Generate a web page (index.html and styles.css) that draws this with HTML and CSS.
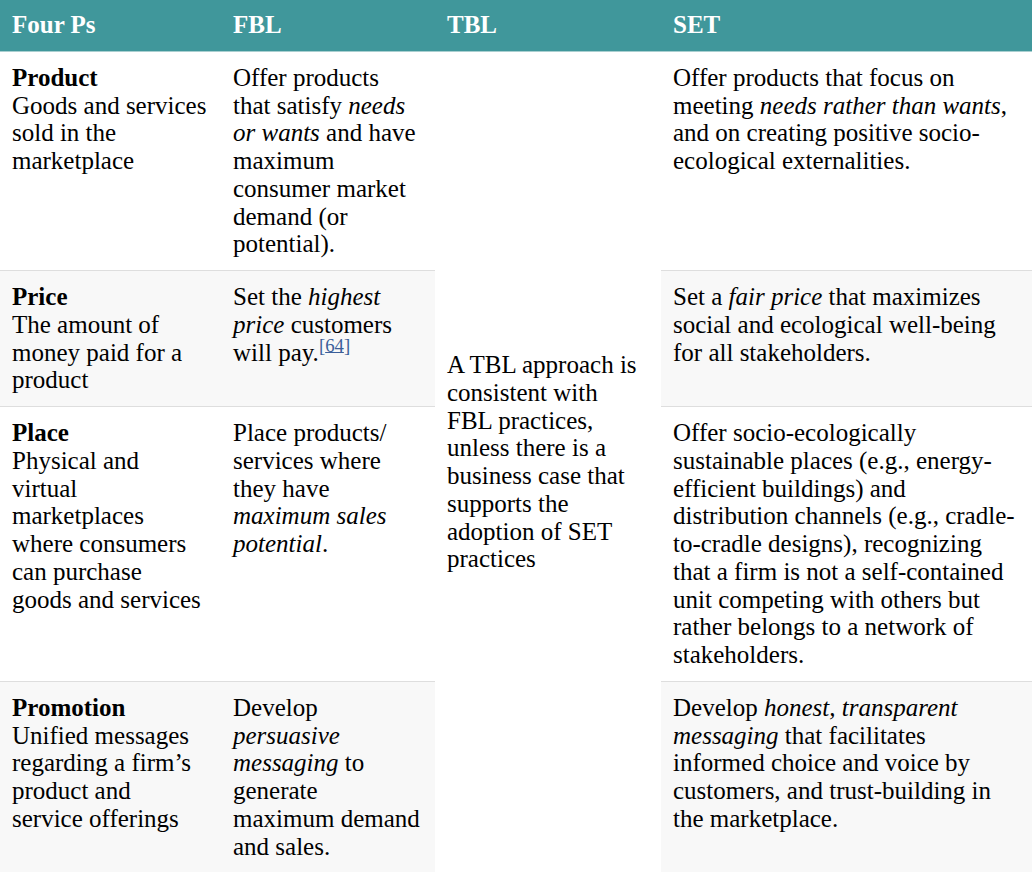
FILE: index.html
```html
<!DOCTYPE html>
<html>
<head>
<meta charset="utf-8">
<link rel="stylesheet" href="styles.css">
</head>
<body>
<table class="ps-table">
  <colgroup>
    <col class="c1"><col class="c2"><col class="c3"><col class="c4">
  </colgroup>
  <thead>
    <tr>
      <th>Four Ps</th>
      <th>FBL</th>
      <th>TBL</th>
      <th>SET</th>
    </tr>
  </thead>
  <tbody>
    <tr class="odd">
      <td class="ps"><b>Product</b><br>Goods and services sold in the marketplace</td>
      <td class="fbl">Offer products that satisfy <i>needs or wants</i> and have maximum consumer market demand (or potential).</td>
      <td class="tbl" rowspan="4">A TBL approach is consistent with FBL practices, unless there is a business case that supports the adoption of SET practices</td>
      <td class="set">Offer products that focus on meeting <i>needs rather than wants</i>, and on creating positive socio-ecological externalities.</td>
    </tr>
    <tr class="even">
      <td class="ps"><b>Price</b><br>The amount of money paid for a product</td>
      <td class="fbl">Set the <i>highest price</i> customers will pay.<sup class="ref">[<a href="#">64</a>]</sup></td>
      <td class="set">Set a <i>fair price</i> that maximizes social and ecological well-being for all stakeholders.</td>
    </tr>
    <tr class="odd">
      <td class="ps"><b>Place</b><br>Physical and virtual marketplaces where consumers can purchase goods and services</td>
      <td class="fbl">Place products/ services where they have <i>maximum sales potential</i>.</td>
      <td class="set">Offer socio-ecologically sustainable places (e.g., energy-efficient buildings) and distribution channels (e.g., cradle-to-cradle designs), recognizing that a firm is not a self-contained unit competing with others but rather belongs to a network of stakeholders.</td>
    </tr>
    <tr class="even">
      <td class="ps"><b>Promotion</b><br>Unified messages regarding a firm’s product and service offerings</td>
      <td class="fbl">Develop <i>persuasive messaging</i> to generate maximum demand and sales.</td>
      <td class="set">Develop <i>honest, transparent messaging</i> that facilitates informed choice and voice by customers, and trust-building in the marketplace.</td>
    </tr>
  </tbody>
</table>
</body>
</html>
```

FILE: styles.css
```css
html, body {
  margin: 0;
  padding: 0;
  background: #ffffff;
}
body {
  font-family: "Liberation Serif", "Times New Roman", serif;
  font-size: 25px;
  line-height: 27.75px;
  color: #000;
}
.ps-table {
  width: 1032px;
  border-collapse: collapse;
  table-layout: fixed;
}
.c1 { width: 221px; }
.c2 { width: 214px; }
.c3 { width: 226px; }
.c4 { width: 371px; }
.ps-table th {
  background: #40979b;
  color: #ffffff;
  font-weight: bold;
  text-align: left;
  padding: 11px 12px 12px 12px;
  border-bottom: 1px solid #a9cfd0;
}
.ps-table td {
  vertical-align: top;
  padding: 12px 12px 12px 12px;
}
.ps-table td.ps {
  padding-right: 13.5px;
}
.ps-table td.fbl {
  padding-right: 13px;
}
.ps-table tr.even td {
  background: #f8f8f8;
}
.ps-table tbody tr + tr td {
  border-top: 1px solid #dedede;
}
.ps-table td.tbl {
  vertical-align: middle;
  background: #ffffff;
}
.ref {
  font-size: 0.75em;
  line-height: 0;
  color: #3b5f9a;
}
.ref a {
  color: #3b5f9a;
  text-decoration: underline;
}
```
